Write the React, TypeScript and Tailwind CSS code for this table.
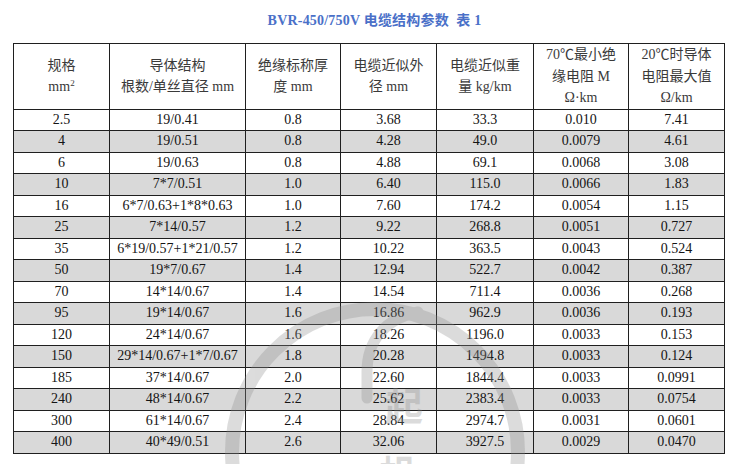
import React from 'react';

const rows: string[][] = [
  ['2.5', '19/0.41', '0.8', '3.68', '33.3', '0.010', '7.41'],
  ['4', '19/0.51', '0.8', '4.28', '49.0', '0.0079', '4.61'],
  ['6', '19/0.63', '0.8', '4.88', '69.1', '0.0068', '3.08'],
  ['10', '7*7/0.51', '1.0', '6.40', '115.0', '0.0066', '1.83'],
  ['16', '6*7/0.63+1*8*0.63', '1.0', '7.60', '174.2', '0.0054', '1.15'],
  ['25', '7*14/0.57', '1.2', '9.22', '268.8', '0.0051', '0.727'],
  ['35', '6*19/0.57+1*21/0.57', '1.2', '10.22', '363.5', '0.0043', '0.524'],
  ['50', '19*7/0.67', '1.4', '12.94', '522.7', '0.0042', '0.387'],
  ['70', '14*14/0.67', '1.4', '14.54', '711.4', '0.0036', '0.268'],
  ['95', '19*14/0.67', '1.6', '16.86', '962.9', '0.0036', '0.193'],
  ['120', '24*14/0.67', '1.6', '18.26', '1196.0', '0.0033', '0.153'],
  ['150', '29*14/0.67+1*7/0.67', '1.8', '20.28', '1494.8', '0.0033', '0.124'],
  ['185', '37*14/0.67', '2.0', '22.60', '1844.4', '0.0033', '0.0991'],
  ['240', '48*14/0.67', '2.2', '25.62', '2383.4', '0.0033', '0.0754'],
  ['300', '61*14/0.67', '2.4', '28.84', '2974.7', '0.0031', '0.0601'],
  ['400', '40*49/0.51', '2.6', '32.06', '3927.5', '0.0029', '0.0470'],
];

const colWidths = ['w-[96px]', 'w-[136px]', 'w-[95px]', 'w-[96px]', 'w-[97px]', 'w-[95px]', 'w-[96px]'];

// faint company watermark lying over the table
function Watermark() {
  return (
    <svg
      className="absolute left-0 top-0 pointer-events-none"
      width="749"
      height="464"
      viewBox="0 0 749 464"
    >
      <g opacity="0.3" fill="none" stroke="#8c8c8c">
        <circle cx="375" cy="452" r="143" strokeWidth="14" />
        <path d="M418 312 C386 318 367 340 367 372 L367 398" strokeWidth="11" strokeLinecap="round" />
      </g>
      <g opacity="0.3" fill="#8c8c8c" fontFamily='"Noto Sans CJK SC", sans-serif' fontWeight="700">
        <text x="404" y="420" fontSize="38" textAnchor="middle">起</text>
        <text x="398" y="488" fontSize="38" textAnchor="middle">帆</text>
      </g>
    </svg>
  );
}

export default function App() {
  const font = { fontFamily: '"Liberation Serif", "Noto Sans CJK SC", serif' };

  return (
    <div className="relative w-[749px] h-[464px] bg-white overflow-hidden" style={font}>
      <div className="flex flex-col items-center pt-[13px]">
        <h1 className="text-[14px] leading-[16px] font-bold text-[#4a70c8] tracking-[0.2px]">
          BVR-450/750V 电缆结构参数&nbsp; 表 1
        </h1>
      </div>

      <table className="mt-[14px] ml-[13px] w-[711px] table-fixed border-collapse border-[1.5px] border-[#1f1f1f] text-[14px] text-[#141414]">
        <colgroup>
          {colWidths.map((w, i) => (
            <col key={i} className={w} />
          ))}
        </colgroup>
        <thead>
          <tr className="h-[64px] text-[#3a3a3a] leading-[21.5px]">
            <th className="border border-[#1f1f1f] font-normal align-middle">
              规格<br />mm<span className="relative -top-[5px] text-[9px] leading-none">2</span>
            </th>
            <th className="border border-[#1f1f1f] font-normal">
              导体结构<br />根数/单丝直径 mm
            </th>
            <th className="border border-[#1f1f1f] font-normal">
              绝缘标称厚<br />度 mm
            </th>
            <th className="border border-[#1f1f1f] font-normal">
              电缆近似外<br />径 mm
            </th>
            <th className="border border-[#1f1f1f] font-normal">
              电缆近似重<br />量 kg/km
            </th>
            <th className="border border-[#1f1f1f] font-normal">
              70℃最小绝<br />缘电阻 M<br />Ω·km
            </th>
            <th className="border border-[#1f1f1f] font-normal">
              20℃时导体<br />电阻最大值<br />Ω/km
            </th>
          </tr>
        </thead>
        <tbody>
          {rows.map((r, i) => (
            <tr key={i} className={`h-[21.5px] leading-[18px] ${i % 2 === 1 ? 'bg-[#d9d9d9]' : 'bg-white'}`}>
              {r.map((c, j) => (
                <td key={j} className="border border-[#1f1f1f] text-center p-0">
                  {c}
                </td>
              ))}
            </tr>
          ))}
        </tbody>
      </table>

      <Watermark />
    </div>
  );
}
